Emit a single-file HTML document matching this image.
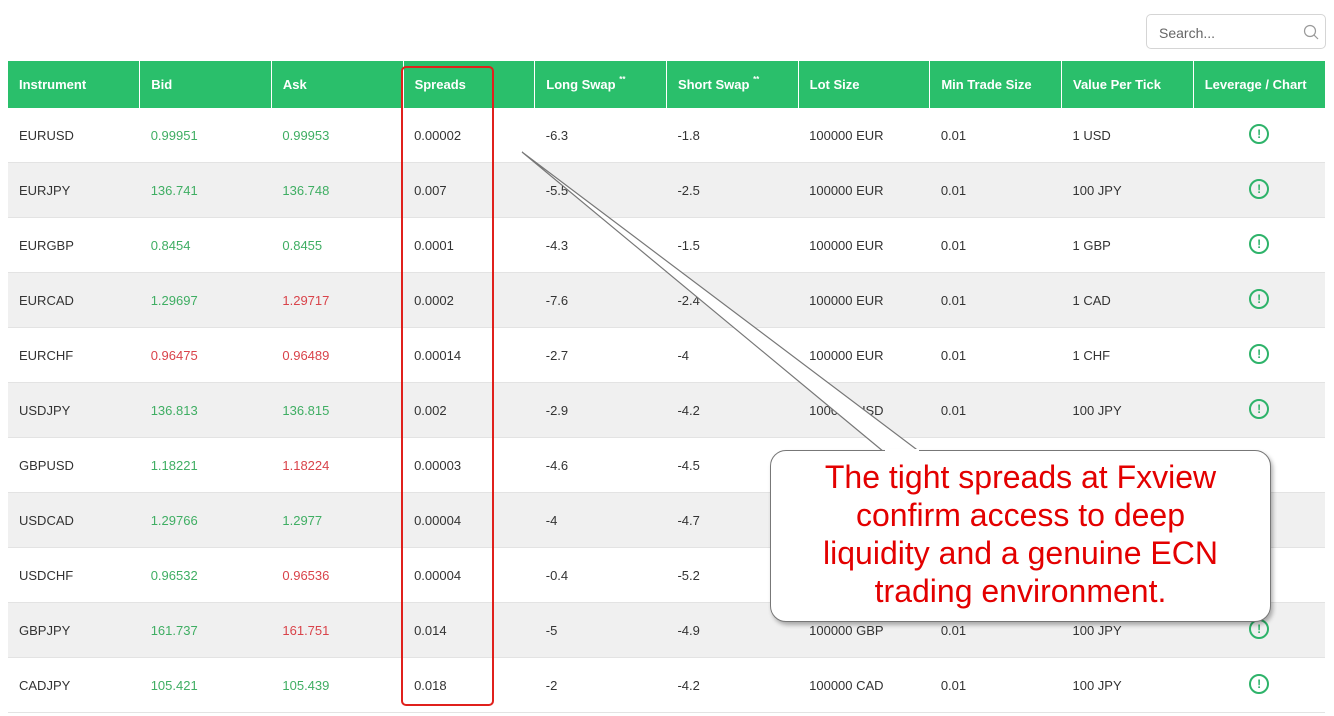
<!DOCTYPE html>
<html><head><meta charset="utf-8"><style>
body{margin:0;width:1334px;height:716px;background:#fff;font-family:"Liberation Sans",sans-serif;position:relative;overflow:hidden}
.search{position:absolute;left:1146px;top:14px;width:180px;height:35px;border:1px solid #d5d5d5;border-radius:5px;box-sizing:border-box;font-size:14px;color:#666;padding:10px 12px}
table{position:absolute;left:8px;top:61px;width:1317px;border-collapse:collapse;table-layout:fixed;font-size:13px;color:#333}
th{background:#2abf6b;color:#fff;font-weight:bold;text-align:left;height:47px;padding:0 0 0 11px;border-left:1px solid #fff;font-size:13px}
th:first-child{border-left:none}
td{height:54px;padding:0 0 0 11px;border-bottom:1px solid #e3e3e3}
tr:nth-child(odd) td{background:#f0f0f0}
sup{font-size:8px;position:relative;top:-7px;line-height:0;vertical-align:baseline}
.g{color:#3fae63}.r{color:#d9434a}
td.i{text-align:center;padding:0}
.ic{display:inline-block;width:20px;height:20px;border:2px solid #2eb36a;border-radius:50%;box-sizing:border-box;color:#2eb36a;font-weight:bold;font-size:12px;line-height:16px;text-align:center;margin-top:-6px}
.box{position:absolute;left:401px;top:66px;width:93px;height:640px;border:2px solid #e0201c;border-radius:5px;box-sizing:border-box}
.bub{position:absolute;left:770px;top:450px;width:501px;height:172px;background:#fff;border:1px solid #777;border-radius:16px;box-sizing:border-box;box-shadow:2px 3px 4px rgba(0,0,0,.3);color:#e30000;font-size:32px;line-height:38px;text-align:center;padding-top:7px}
svg{position:absolute;left:0;top:0}
</style></head><body>
<div class="search">Search...<svg style="left:auto;right:6px;top:9px" width="16" height="16" viewBox="0 0 16 16"><circle cx="7" cy="7" r="5.5" fill="none" stroke="#999" stroke-width="1.2"/><line x1="11" y1="11" x2="15" y2="15" stroke="#999" stroke-width="1.2"/></svg></div>
<table>
<tr><th>Instrument</th><th>Bid</th><th>Ask</th><th>Spreads</th><th>Long Swap <sup>**</sup></th><th>Short Swap <sup>**</sup></th><th>Lot Size</th><th>Min Trade Size</th><th>Value Per Tick</th><th>Leverage / Chart</th></tr>
<tr><td>EURUSD</td><td class="g">0.99951</td><td class="g">0.99953</td><td>0.00002</td><td>-6.3</td><td>-1.8</td><td>100000 EUR</td><td>0.01</td><td>1 USD</td><td class="i"><span class="ic">!</span></td></tr>
<tr><td>EURJPY</td><td class="g">136.741</td><td class="g">136.748</td><td>0.007</td><td>-5.5</td><td>-2.5</td><td>100000 EUR</td><td>0.01</td><td>100 JPY</td><td class="i"><span class="ic">!</span></td></tr>
<tr><td>EURGBP</td><td class="g">0.8454</td><td class="g">0.8455</td><td>0.0001</td><td>-4.3</td><td>-1.5</td><td>100000 EUR</td><td>0.01</td><td>1 GBP</td><td class="i"><span class="ic">!</span></td></tr>
<tr><td>EURCAD</td><td class="g">1.29697</td><td class="r">1.29717</td><td>0.0002</td><td>-7.6</td><td>-2.4</td><td>100000 EUR</td><td>0.01</td><td>1 CAD</td><td class="i"><span class="ic">!</span></td></tr>
<tr><td>EURCHF</td><td class="r">0.96475</td><td class="r">0.96489</td><td>0.00014</td><td>-2.7</td><td>-4</td><td>100000 EUR</td><td>0.01</td><td>1 CHF</td><td class="i"><span class="ic">!</span></td></tr>
<tr><td>USDJPY</td><td class="g">136.813</td><td class="g">136.815</td><td>0.002</td><td>-2.9</td><td>-4.2</td><td>100000 USD</td><td>0.01</td><td>100 JPY</td><td class="i"><span class="ic">!</span></td></tr>
<tr><td>GBPUSD</td><td class="g">1.18221</td><td class="r">1.18224</td><td>0.00003</td><td>-4.6</td><td>-4.5</td><td>100000 GBP</td><td>0.01</td><td>1 USD</td><td class="i"><span class="ic">!</span></td></tr>
<tr><td>USDCAD</td><td class="g">1.29766</td><td class="g">1.2977</td><td>0.00004</td><td>-4</td><td>-4.7</td><td>100000 USD</td><td>0.01</td><td>1 CAD</td><td class="i"><span class="ic">!</span></td></tr>
<tr><td>USDCHF</td><td class="g">0.96532</td><td class="r">0.96536</td><td>0.00004</td><td>-0.4</td><td>-5.2</td><td>100000 USD</td><td>0.01</td><td>1 CHF</td><td class="i"><span class="ic">!</span></td></tr>
<tr><td>GBPJPY</td><td class="g">161.737</td><td class="r">161.751</td><td>0.014</td><td>-5</td><td>-4.9</td><td>100000 GBP</td><td>0.01</td><td>100 JPY</td><td class="i"><span class="ic">!</span></td></tr>
<tr><td>CADJPY</td><td class="g">105.421</td><td class="g">105.439</td><td>0.018</td><td>-2</td><td>-4.2</td><td>100000 CAD</td><td>0.01</td><td>100 JPY</td><td class="i"><span class="ic">!</span></td></tr>
</table>
<div class="box"></div>
<svg width="1334" height="716"><polygon points="522,152 884,452 920,452" fill="#fff" stroke="#777" stroke-width="1.2"/></svg>
<div class="bub">The tight spreads at Fxview<br>confirm access to deep<br>liquidity and a genuine ECN<br>trading environment.</div>
<svg width="1334" height="716"><polygon points="885,449 919,449 919,453 885,453" fill="#fff"/></svg>
</body></html>
